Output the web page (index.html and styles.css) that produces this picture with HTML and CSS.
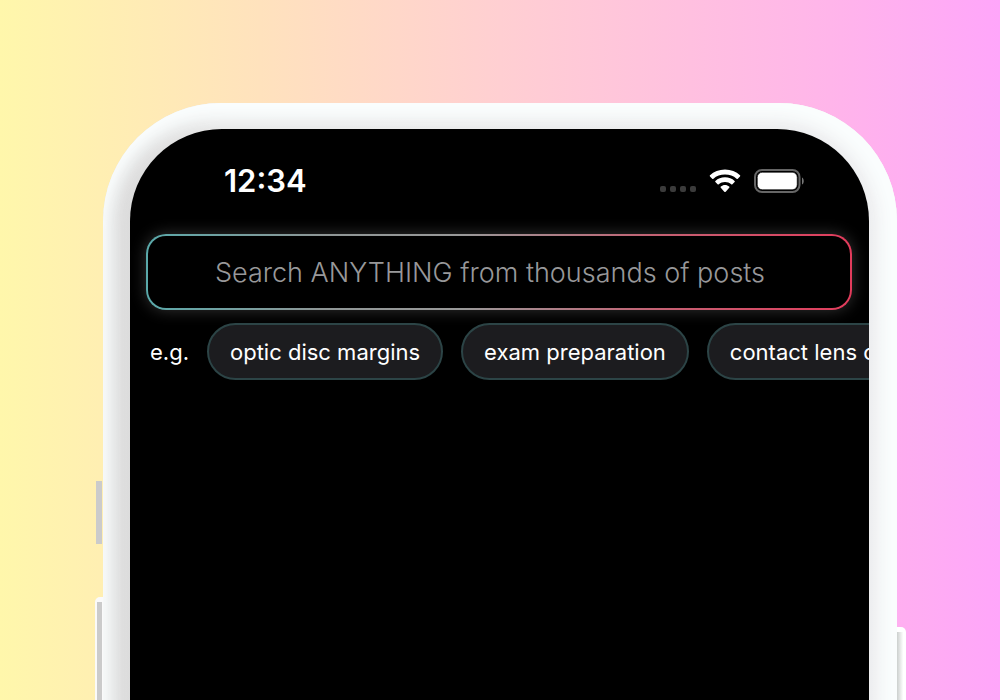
FILE: index.html
```html
<!DOCTYPE html>
<html lang="en">
<head>
	<meta charset="UTF-8">
	<meta name="viewport" content="width=device-width, initial-scale=1">
	<title>Search</title>
	<link rel="stylesheet" href="styles.css">
</head>
<body>
<main class="stage">
	<div class="phone">
		<!-- hardware buttons -->
		<span class="side-key action"></span>
		<span class="side-key volume"></span>
		<span class="side-key power"></span>

		<div class="screen">
			<div class="status-bar">
				<span class="time">12:34</span>
				<div class="status-icons">
					<svg class="signal" width="36" height="24" viewBox="0 0 36 24" fill="#3b3b3b" aria-hidden="true">
						<rect x="0" y="17" width="6" height="6" rx="2"/>
						<rect x="10" y="17" width="6" height="6" rx="2"/>
						<rect x="20" y="17" width="6" height="6" rx="2"/>
						<rect x="30" y="17" width="6" height="6" rx="2"/>
					</svg>
					<svg class="wifi" width="32" height="24" viewBox="0 0 32 24" fill="#fff" aria-hidden="true">
						<path d="M16 0.500C10 .500 4.800 2.700 1 6.300Q.400 6.900 1 7.500L3.200 9.700Q3.800 10.200 4.400 9.700C7.500 6.900 11.500 5.500 16 5.500S24.500 6.900 27.600 9.700Q28.200 10.200 28.800 9.700L31 7.500Q31.600 6.900 31 6.300C27.200 2.700 22 .500 16 .500Z"/>
						<path d="M16 8.300C12.200 8.300 8.900 9.700 6.400 11.900Q5.800 12.500 6.400 13.100L8.600 15.300Q9.200 15.800 9.800 15.300C11.500 13.900 13.600 13.100 16 13.100S20.500 13.900 22.200 15.300Q22.800 15.800 23.400 15.300L25.600 13.100Q26.200 12.500 25.600 11.900C23.100 9.700 19.800 8.300 16 8.300Z"/>
						<path d="M16 16C14.400 16 13 16.600 11.900 17.500Q11.200 18.100 11.800 18.800L15.300 22.700Q16 23.300 16.700 22.700L20.200 18.800Q20.800 18.100 20.100 17.500C19 16.600 17.600 16 16 16Z"/>
					</svg>
					<svg class="battery" width="50" height="24" viewBox="0 0 50 24" aria-hidden="true">
						<rect x="1" y="1" width="44.500" height="22" rx="7" fill="none" stroke="#666" stroke-width="2"/>
						<rect x="3.300" y="3.300" width="39.900" height="17.400" rx="5" fill="#fff" stroke="#000" stroke-width="0.600"/>
						<path d="M48 8.500C50.300 9.500 50.300 14.500 48 15.500Z" fill="#777"/>
					</svg>
				</div>
			</div>

			<form class="search">
				<input type="text" class="search-input" placeholder="Search ANYTHING from thousands of posts" aria-label="Search posts">
			</form>

			<div class="examples">
				<span class="eg">e.g.</span>
				<button type="button" class="chip">optic disc margins</button>
				<button type="button" class="chip">exam preparation</button>
				<button type="button" class="chip">contact lens care</button>
			</div>
		</div>
	</div>
</main>
</body>
</html>
```

FILE: styles.css
```css
*{
	box-sizing: border-box;
}

body{
	margin: 0;
	font-family: Inter, "Liberation Sans", sans-serif;
	background: linear-gradient(90deg, #fff7ab 0%, #ffe2bd 26%, #ffcfd2 50%, #ffb5ea 83%, #ffa6fa 100%);
}

.stage{
	display: flex;
	height: 100vh;
	padding: 103px 103px 0;
	overflow: hidden;
}

/* white frame, darker towards the screen and on the left; runs off the bottom */
.phone{
	position: relative;
	flex: 1;
	display: flex;
	min-width: 0;
	margin-bottom: -60px;
	padding: 26px 28px 0 27px;
	border-radius: 118px 118px 0 0;
	background: linear-gradient(90deg, #dadada, #e6e6e6 15%, #ececee);
	box-shadow: inset -8px 6px 18px 10px #fafdfd, inset 0 0 20px 6px #fafdfd;
}

.screen{
	position: relative;
	flex: 1;
	min-width: 0;
	overflow: hidden;
	border-radius: 92px 92px 0 0;
	background: #000;
}

.side-key{
	position: absolute;
	background: #cbcbcb;
}

.action{
	top: 378px;
	left: -7px;
	width: 6px;
	height: 63px;
}

.volume{
	top: 494px;
	left: -8px;
	bottom: 0;
	width: 8px;
	border: solid #fafafa;
	border-width: 5px 1px 0 2px;
	border-radius: 5px 0 0 0;
}

.power{
	top: 524px;
	right: -9px;
	bottom: 0;
	width: 9px;
	border-top: 5px solid #fff;
	border-radius: 0 5px 0 0;
	background: linear-gradient(90deg, #ccd0ce, #fff 70%);
}

.status-bar{
	display: flex;
	justify-content: space-between;
	align-items: center;
	padding: 32px 65px 0 94px;
	color: #fff;
}

.time{
	font-size: 31px;
	font-weight: 600;
	line-height: 40px;
}

.status-icons{
	display: flex;
	align-items: center;
	gap: 13px;
}

/* gradient outline with a soft glow */
.search{
	margin: 33px 17px 0 16px;
	border: 2px solid transparent;
	border-radius: 20px;
	background:
		linear-gradient(#000, #000) padding-box,
		linear-gradient(90deg, #5aa9aa 0%, #8f9696 25%, #999 45%, #c46274 72%, #e23c5c 100%) border-box;
	box-shadow: 0 0 16px rgba(255, 255, 255, .2);
}

.search-input{
	display: block;
	width: 100%;
	height: 72px;
	padding: 0 18px 0 0;
	border: 0;
	border-radius: 18px;
	background: transparent;
	color: #fff;
	font-family: inherit;
	font-size: 27px;
	font-weight: 300;
	text-align: center;
	outline: none;
}

.search-input::placeholder{
	color: #98989a;
	opacity: 1;
}

.examples{
	display: flex;
	align-items: center;
	gap: 18px;
	margin-top: 13px;
	padding-left: 20px;
	color: #fff;
	font-size: 22px;
}

.chip{
	flex: none;
	height: 57px;
	padding: 0 21px;
	border: 2px solid #2c4446;
	border-radius: 29px;
	background: #1c1c1f;
	color: #fff;
	font-family: inherit;
	font-size: 22px;
}
```
